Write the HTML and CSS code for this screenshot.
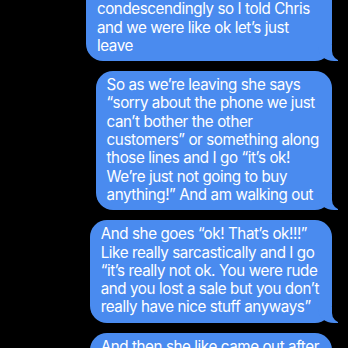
FILE: index.html
```html
<!DOCTYPE html>
<html>
<head>
<meta charset="utf-8">
<link rel="stylesheet" href="styles.css">
</head>
<body>
<div class="thread">
  <div class="bubble b1">and she was saying all that really<br>condescendingly so I told Chris<br>and we were like ok let’s just<br>leave</div>
  <div class="bubble b2">So as we’re leaving she says<br>“sorry about the phone we just<br>can’t bother the other<br>customers” or something along<br>those lines and I go “it’s ok!<br>We’re just not going to buy<br>anything!” And am walking out</div>
  <div class="bubble b3">And she goes “ok! That’s ok!!!”<br>Like really sarcastically and I go<br>“it’s really not ok. You were rude<br>and you lost a sale but you don’t<br>really have nice stuff anyways”</div>
  <div class="bubble b4">And then she like came out after<br>us and was like</div>
</div>
</body>
</html>
```
FILE: styles.css
```css
html, body {
  margin: 0;
  padding: 0;
  background: #000;
  width: 348px;
  height: 348px;
  overflow: hidden;
}
.thread {
  display: flex;
  flex-direction: column;
  align-items: flex-end;
  gap: 10px;
  margin-top: -23px;
  padding-right: 16px;
}
.bubble {
  position: relative;
  background: #4a8bef;
  color: #fff;
  font-family: Inter, "Noto Sans", sans-serif;
  font-size: 15.2px;
  letter-spacing: -0.42px;
  line-height: 18.3px;
  padding: 5px 13px 6px 11px;
  border-radius: 17px;
}
.bubble::before {
  content: "";
  position: absolute;
  bottom: 0;
  right: -6px;
  width: 20px;
  height: 16px;
  background: #4a8bef;
  border-bottom-left-radius: 16px 14px;
}
.bubble::after {
  content: "";
  position: absolute;
  bottom: 0;
  right: -26px;
  width: 26px;
  height: 16px;
  background: #000;
  border-bottom-left-radius: 10px;
}
```
